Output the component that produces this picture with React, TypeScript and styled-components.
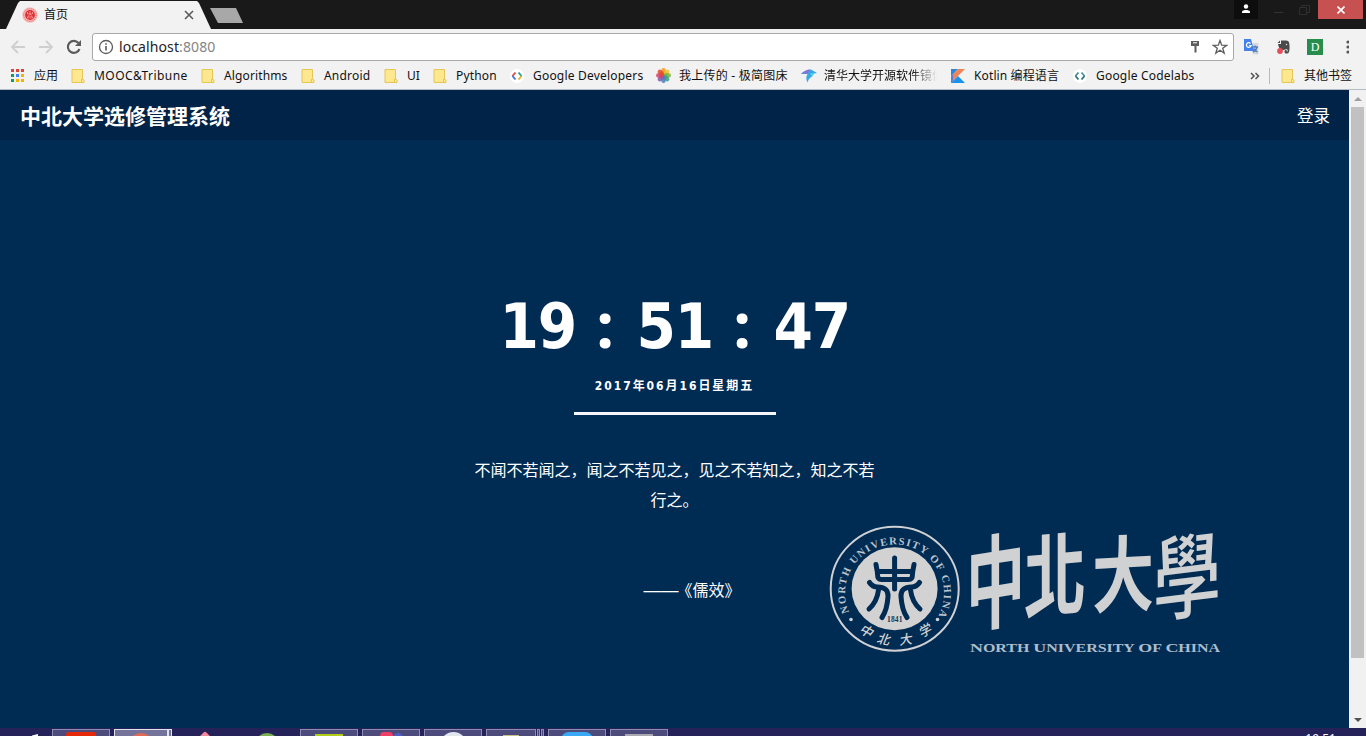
import React from 'react';
import styled, { createGlobalStyle } from 'styled-components';

const GlobalStyle = createGlobalStyle`
  * { box-sizing: border-box; }
  body { margin: 0; overflow: hidden; background: #002b53; }
  svg { display: block; flex: none; }
`;

const ui = `"Noto Sans", "Noto Sans CJK SC", sans-serif`;

const Screen = styled.div`
  width: 1366px;
  height: 736px;
  display: flex;
  flex-direction: column;
  overflow: hidden;
  font-family: ${ui};
`;

/* ---------- browser chrome ---------- */

const TabStrip = styled.div`
  height: 29px;
  flex: none;
  display: flex;
  background: #191919;
`;

const Tab = styled.div`
  width: 205px;
  height: 29px;
  margin-left: 6px;
  padding: 0 17px 0 16px;
  display: flex;
  align-items: center;
  background: #f2f2f2;
  clip-path: polygon(0 100%, 12px 3px, 14px 1px, 191px 1px, 193px 3px, 205px 100%);
`;

const TabTitle = styled.span`
  flex: 1;
  margin-left: 6px;
  font-size: 12px;
  line-height: 16px;
  color: #111;
`;

const NewTab = styled.div`
  width: 33px;
  height: 15px;
  margin: 8px 0 0 -1px;
  background: #a8a8a8;
  clip-path: polygon(0 0, 26px 0, 33px 100%, 8px 100%);
`;

const WindowButtons = styled.div`
  margin-left: auto;
  margin-right: 3px;
  display: flex;
`;

const WindowButton = styled.div<{ $w: number; $h?: number; $bg?: string; $pb?: number }>`
  width: ${p => p.$w}px;
  height: ${p => p.$h ?? 19}px;
  padding-bottom: ${p => p.$pb ?? 0}px;
  display: flex;
  align-items: center;
  justify-content: center;
  background: ${p => p.$bg ?? 'transparent'};
`;

const Toolbar = styled.div`
  height: 33px;
  flex: none;
  display: flex;
  align-items: center;
  padding: 3px 9px 0 10px;
  background: #f2f2f2;
`;

const NavIcons = styled.div`
  width: 82px;
  display: flex;
  gap: 12px;
`;

const AddressBar = styled.div`
  width: 1142px;
  height: 28px;
  padding: 0 5px 0 5px;
  display: flex;
  align-items: center;
  border: 1px solid #a9a9a9;
  border-radius: 3px;
  background: #fff;
`;

const Url = styled.span`
  flex: 1;
  margin-left: 5px;
  font-size: 14px;
  line-height: 20px;
  letter-spacing: 0.1px;
  color: #222;
`;

const Port = styled.span`
  color: #858585;
`;

const AddressActions = styled.div`
  display: flex;
  align-items: center;
  gap: 12px;
`;

const Extensions = styled.div`
  margin-left: 9px;
  display: flex;
  align-items: center;
  gap: 16px;
`;

const Bookmarks = styled.div`
  height: 28px;
  flex: none;
  display: flex;
  align-items: center;
  padding-left: 10px;
  background: #f2f2f2;
  border-bottom: 1px solid #b5bcc4;
`;

const Bookmark = styled.div<{ $w: number; $gap?: number }>`
  width: ${p => p.$w}px;
  flex: none;
  display: flex;
  align-items: center;
  gap: ${p => p.$gap ?? 9}px;
`;

const BookmarkLabel = styled.span<{ $track?: number; $fade?: boolean }>`
  font-size: 12px;
  line-height: 16px;
  white-space: nowrap;
  color: #111;
  letter-spacing: ${p => p.$track ?? 0}px;
  ${p => p.$fade && `
    width: 113px;
    overflow: hidden;
    mask-image: linear-gradient(to right, #000 88px, transparent 113px);
  `}
`;

const Divider = styled.div`
  width: 1px;
  height: 16px;
  margin: 0 11px 0 9px;
  background: #b9b9b9;
`;

/* ---------- page ---------- */

const Viewport = styled.div`
  height: 638px;
  flex: none;
  display: flex;
`;

const Page = styled.div`
  flex: 1;
  display: flex;
  flex-direction: column;
  background: #002b53;
  color: #fff;
`;

const SiteHeader = styled.header`
  height: 50px;
  flex: none;
  padding: 1px 19px 0 20px;
  display: flex;
  align-items: center;
  justify-content: space-between;
  background: #002347;
`;

const SiteTitle = styled.h1`
  margin: 0;
  font-size: 21px;
  line-height: 30px;
  font-weight: 700;
`;

const LoginLink = styled.span`
  font-size: 16.5px;
  line-height: 24px;
`;

const Hero = styled.main`
  flex: 1;
  display: grid;
  grid-template: 1fr / 1fr;
`;

const Intro = styled.section`
  grid-area: 1 / 1;
  display: flex;
  flex-direction: column;
  align-items: center;
  padding-top: 149px;
`;

const Clock = styled.div`
  height: 76px;
  display: flex;
  font-weight: 700;
  line-height: 76px;
`;

const ClockDigits = styled.span`
  width: 76px;
  padding-right: 3px;
  text-align: center;
  white-space: nowrap;
  font-family: "DejaVu Sans Condensed", "DejaVu Sans", sans-serif;
  font-size: 63px;
  font-stretch: condensed;
  letter-spacing: -1.2px;
`;

const ClockColon = styled.span`
  width: 61px;
  padding-right: 2px;
  text-align: center;
  font-family: "Noto Sans", sans-serif;
  font-size: 63px;
  line-height: 70px;
`;

const DateLine = styled.div`
  margin-top: 12px;
  font: 700 12px/18px "DejaVu Sans Condensed", "Noto Sans CJK SC", sans-serif;
  font-stretch: condensed;
  letter-spacing: 1.95px;
`;

const Rule = styled.div`
  width: 202px;
  height: 3px;
  margin: 17px 0 0 1px;
  background: #f5f7fa;
`;

const Quote = styled.p`
  width: 404px;
  margin: 39px 0 0;
  font: 400 16px/30px "Noto Sans CJK SC", sans-serif;
  text-align: center;
`;

const Source = styled.p`
  margin: 60px 0 0 35px;
  font: 400 16px/30px "Noto Sans CJK SC", sans-serif;
`;

const Dash = styled.span`
  margin-right: -2px;
  font-family: "Liberation Sans", sans-serif;
  font-size: 17.5px;
  line-height: 1;
`;

const LogoSlot = styled.div`
  grid-area: 1 / 1;
  place-self: end;
  margin: 0 119px 68px 0;
`;

const Scrollbar = styled.div`
  width: 17px;
  display: flex;
  flex-direction: column;
  align-items: center;
  background: #f1f1f1;
`;

const ScrollArrow = styled.div`
  height: 17px;
  display: flex;
  align-items: center;
`;

const Thumb = styled.div`
  width: 13px;
  height: 551px;
  margin-bottom: auto;
  background: #c1c1c1;
`;

/* ---------- taskbar ---------- */

const Taskbar = styled.div`
  height: 8px;
  flex: none;
  display: flex;
  padding-top: 1px;
  overflow: hidden;
  background: #25225a;
`;

const TaskSlot = styled.div<{ $w: number; $mr?: number; $kind?: 'open' | 'active' }>`
  width: ${p => p.$w}px;
  height: 12px;
  margin-right: ${p => p.$mr ?? 4}px;
  flex: none;
  display: flex;
  justify-content: center;
  overflow: hidden;
  border: 0 solid ${p => (p.$kind === 'active' ? '#e2e2ee' : '#8d8bb0')};
  border-width: ${p => (p.$kind ? '1px 1px 0' : '0')};
  background: ${p => (p.$kind === 'active' ? '#74749a' : p.$kind ? '#4d4b7c' : 'transparent')};
`;

const AppShape = styled.div<{ $w: number; $top: number; $bg: string; $radius?: string }>`
  width: ${p => p.$w}px;
  height: ${p => p.$w}px;
  flex: none;
  margin-top: ${p => p.$top}px;
  border-radius: ${p => p.$radius ?? '0'};
  background: ${p => p.$bg};
`;

const Diamond = styled(AppShape)`
  transform: rotate(45deg);
`;

const Tray = styled.div`
  margin: 4px 30px 0 auto;
  font-size: 12px;
  line-height: 12px;
  color: #fff;
`;

/* ---------- drawings ---------- */

const Folder = () => (
  <svg width="14" height="16" viewBox="0 0 14 16">
    <path d="M1 1.500h10.500v9.500l1.500 1v2.500H1z" fill="#fee88f" stroke="#e6c655" />
    <path d="M10.500 14v-3h1.500" fill="none" stroke="#e6c655" />
  </svg>
);

const AppsGrid = () => {
  const colors = ['#dc4437', '#dc4437', '#dc4437', '#149c5b', '#4284f3', '#f3b400', '#149c5b', '#f3b400', '#f3b400'];
  return (
    <svg width="14" height="14" viewBox="0 0 14 14">
      {colors.map((c, i) => (
        <rect key={i} x={1 + (i % 3) * 5} y={Math.floor(i / 3) * 5} width="3" height="3" fill={c} />
      ))}
    </svg>
  );
};

const Favicon = () => (
  <svg width="16" height="16" viewBox="0 0 16 16">
    <circle cx="8" cy="8" r="7.700" fill="#f9b9b7" />
    <circle cx="8" cy="8" r="6.300" fill="none" stroke="#ee6e6e" strokeDasharray="1.200 .8" />
    <circle cx="8" cy="8" r="4.900" fill="#dc2f35" />
    <path d="M5.500 5v2h5V5M8 4v4.500M6.500 8.500 5 11.500M9.500 8.500l1.500 3M7 9v2.500M9 9v2.500" stroke="#f8a5a2" strokeWidth=".8" fill="none" />
  </svg>
);

const Arrow = ({ flip }: { flip?: boolean }) => (
  <svg width="16" height="16" viewBox="0 0 16 16">
    <path d={flip ? 'M1 8h13M8 2l6 6-6 6' : 'M15 8H2M8 2 2 8l6 6'} fill="none" stroke="#cfcfcf" strokeWidth="1.800" />
  </svg>
);

const Reload = () => (
  <svg width="16" height="16" viewBox="0 0 16 16">
    <path d="M13.500 10A6 6 0 1 1 12.500 4" fill="none" stroke="#5a5a5a" strokeWidth="2.100" />
    <path d="M15 1v6H9z" fill="#5a5a5a" />
  </svg>
);

const Info = () => (
  <svg width="16" height="16" viewBox="0 0 16 16">
    <circle cx="8" cy="8" r="6.500" fill="none" stroke="#5c5c5c" strokeWidth="1.300" />
    <path d="M8 7v4.500M8 4.200v1.600" stroke="#5c5c5c" strokeWidth="1.600" />
  </svg>
);

const KeyIcon = () => (
  <svg width="10" height="14" viewBox="0 0 10 14">
    <path d="M1 1h8v5H6.500v6.500h-2V6H1z" fill="#5c5c5c" />
    <path d="M3 2.800h4" stroke="#fff" />
  </svg>
);

const StarIcon = () => (
  <svg width="16" height="16" viewBox="0 0 16 16">
    <path d="m8 1.500 1.700 4.700 5 .1-4 3 1.500 4.900L8 11.300l-4.200 2.900 1.500-4.900-4-3 5-.1z" fill="none" stroke="#5c5c5c" strokeWidth="1.300" />
  </svg>
);

const TranslateIcon = () => (
  <svg width="17" height="16" viewBox="0 0 17 16">
    <path d="M7 4h8.500v11.500H10z" fill="#d5d9df" />
    <path d="M1 0h7l3 12H1z" fill="#4382ed" />
    <path d="M7.500 4.500A2.300 2.300 0 1 0 8 6.500H6" fill="none" stroke="#fff" strokeWidth="1.200" />
    <path d="M9.500 8H15M12 6.500V8M14 8c-.5 2.500-2 4-4 5M10.500 9.500c1 1.500 2.500 3 4 3.500" stroke="#557eb8" strokeWidth="1.400" fill="none" />
  </svg>
);

const ElephantIcon = () => (
  <svg width="15" height="16" viewBox="0 0 15 16">
    <path d="M5 1.500h5c2 .2 3 1 3.200 2.500.6 3 .5 7-.2 9-.7 2-4.200 2-4.500 0-.2-1.600 1-2.200 2.200-1.800v1.200h.8c.5-1.500 0-2-1-2.200-1.500-.2-2 .8-3.500.8C4 11 2.500 8 2 5h3z" fill="#4b4b4b" />
    <path d="M4 1.500V4H1.500z" fill="#4b4b4b" />
    <circle cx="4" cy="12" r="2.900" fill="#e34e58" />
    <circle cx="10.500" cy="5.500" r=".7" fill="#f2f2f2" />
  </svg>
);

const DBadge = styled.div`
  width: 16px;
  height: 16px;
  display: grid;
  place-items: center;
  background: #278d4c;
  color: #fff;
  font: 12px/16px "Liberation Serif", serif;
`;

const Dots = () => (
  <svg width="10" height="14" viewBox="0 0 10 14">
    {[2, 7, 12].map(y => <circle key={y} cx="9" cy={y} r="1.600" fill="#555" />)}
  </svg>
);

const Brackets = ({ colors }: { colors: string[] }) => (
  <svg width="14" height="14" viewBox="0 0 14 14">
    <circle cx="7" cy="7" r="7" fill="#fff" />
    <g fill="none" strokeWidth="1.900">
      <path d="M5.500 3.500 2.500 7" stroke={colors[0]} />
      <path d="m2.500 7 3 3.500" stroke={colors[1]} />
      <path d="m8.500 3.500 3 3.500" stroke={colors[2]} />
      <path d="m11.500 7-3 3.500" stroke={colors[3]} />
    </g>
  </svg>
);

const Flower = () => {
  const petals = ['#f39a1d', '#e9c62b', '#7eb73d', '#3ba58a', '#4b83c5', '#875bb0', '#d64673', '#e34c30'];
  return (
    <svg width="15" height="15" viewBox="0 0 15 15">
      <circle cx="7.500" cy="7.500" r="4" fill="#b5653f" />
      {petals.map((c, i) => (
        <ellipse key={c} cx="7.500" cy="3.800" rx="2.400" ry="3.700" fill={c} opacity=".88" transform={`rotate(${i * 45} 7.500 7.500)`} />
      ))}
    </svg>
  );
};

const BirdIcon = () => (
  <svg width="16" height="14" viewBox="0 0 16 14">
    <path d="M0 5c3-3 6-4.500 10-4.500L16 4l-3 .5-2 3C9 9 7 10 7 13.500 5.500 12 5 10 5.500 7.500L6.500 5z" fill="#35a9e5" />
    <path d="M0 5c2.500-2.500 5-4 9-4.500L6.500 5C4 4 2 4 0 5z" fill="#8d70d4" />
    <path d="m9 4.500 7-.5-3 .5-2 3z" fill="#53d4e8" />
  </svg>
);

const KotlinIcon = () => (
  <svg width="14" height="14" viewBox="0 0 14 14">
    <path d="M0 0h7L0 7.500z" fill="#2a86dc" />
    <path d="M7 0h7L0 14V7.500z" fill="#ee8458" />
    <path d="m0 14 7-7 7 7z" fill="#1894ef" />
    <path d="M0 7.500 2 5.500V12l-2 2z" fill="#6377cf" />
  </svg>
);

/* University lockup: round seal, wordmark and English name */
const UniversityLogo = () => (
  <svg width="410" height="145" viewBox="0 0 410 145">
    <defs>
      <path id="sealArc" d="M29.500 98A49.500 48.500 0 1 1 120.500 96L119 99.500 117 103" />
    </defs>
    <g fill="none" stroke="#cfd1d4">
      <ellipse cx="74.700" cy="73.700" rx="64" ry="62" strokeWidth="2" />
    </g>
    <ellipse cx="74.600" cy="73.700" rx="43" ry="41.500" fill="#d2d2d3" />
    <text fill="#bdc5ce" fontFamily="'Liberation Serif', serif" fontSize="10.500" fontWeight="700">
      <textPath href="#sealArc" startOffset="1" textLength="197" lengthAdjust="spacing">NORTH UNIVERSITY OF CHINA</textPath>
    </text>
    <g fill="none" stroke="#002b53" strokeWidth="5" strokeLinecap="round" strokeLinejoin="round">
      <path d="M56 49.500c.5 4 1.500 6 1.500 9.500 0 4 1 5.500 4 5.500h27c3 0 4-1.500 4-5.500 0-3.500 1-5.500 1.500-9.500" />
      <path d="M58.500 56.500h33M74.600 43v31" />
      <path d="M49.500 67.500c2 3 4.500 4.500 8 4.500 7 0 11 3 10.500 9.500-.5 8-2 15-6 21" />
      <path d="M58.500 75c-1 8-4 14-9.500 19" />
      <path d="M99.500 67.500c-2 3-4.500 4.500-8 4.500-7 0-11 3-10.500 9.500.5 8 2 15 6 21" />
      <path d="M90.500 75c1 8 4 14 9.500 19" />
    </g>
    <text x="67" y="107" textLength="15.500" fill="#183653" fontFamily="'Liberation Serif', serif" fontSize="7.500" fontWeight="700">1841</text>
    <circle cx="31" cy="104.500" r="1.800" fill="#cfd1d4" />
    <circle cx="117.500" cy="104.500" r="1.800" fill="#cfd1d4" />
    <g fill="#cfd1d4" fontFamily="'Noto Sans CJK SC', sans-serif" fontSize="13" fontWeight="500" textAnchor="middle">
      <text transform="translate(44 120) rotate(28) skewX(-12)">中</text>
      <text transform="translate(62.500 129) rotate(10) skewX(-12)">北</text>
      <text transform="translate(86 129) rotate(-8) skewX(-12)">大</text>
      <text transform="translate(107 120) rotate(-28) skewX(-12)">学</text>
    </g>
    <g fill="#d0d1d2" fontFamily="'Noto Sans CJK TC', sans-serif" fontSize="100" fontWeight="500">
      <text transform="translate(146 110) skewY(-9) scale(.59 1.02)" fontWeight="700">中</text>
      <text transform="translate(204 97) skewY(-5) scale(.62 .91)" fontWeight="700">北</text>
      <text transform="translate(272 92) skewY(-3) scale(.62 .83)" fontWeight="700">大</text>
      <text transform="translate(333 100) skewY(-7) scale(.68 .92)">學</text>
    </g>
    <text x="150" y="136.500" textLength="250" lengthAdjust="spacingAndGlyphs" fill="#aebdcb" fontFamily="'Liberation Serif', serif" fontSize="12" fontWeight="700">
      <tspan fontSize="13.500">N</tspan>ORTH <tspan fontSize="13.500">U</tspan>NIVERSITY <tspan fontSize="13.500">O</tspan>F <tspan fontSize="13.500">C</tspan>HINA
    </text>
  </svg>
);

const App: React.FC = () => (
  <Screen>
    <GlobalStyle />
    <TabStrip>
      <Tab>
        <Favicon />
        <TabTitle>首页</TabTitle>
        <svg width="10" height="10" viewBox="0 0 10 10"><path d="m1 1 8 8M9 1 1 9" stroke="#5a5a5a" strokeWidth="1.600" /></svg>
      </Tab>
      <NewTab />
      <WindowButtons>
        <WindowButton $w={24} $bg="#0d0d0d" $pb={2}>
          <svg width="10" height="10" viewBox="0 0 10 10"><circle cx="5" cy="2.500" r="2.200" fill="#fff" /><path d="M1 9V7.500C2 5.500 8 5.500 9 7.500V9z" fill="#fff" /></svg>
        </WindowButton>
        <WindowButton $w={40}>
          <svg width="9" height="9" viewBox="0 0 9 9"><path d="M0 7.500h9" stroke="#333" /></svg>
        </WindowButton>
        <WindowButton $w={12}>
          <svg width="11" height="10" viewBox="0 0 11 10"><path d="M.5 2.500h7v7h-7zM3 2V.5h7.500v7H8" fill="none" stroke="#303030" /></svg>
        </WindowButton>
        <WindowButton $w={8} />
        <WindowButton $w={45} $bg="#c75050">
          <svg width="8" height="8" viewBox="0 0 8 8"><path d="m.5.5 7 7m0-7-7 7" stroke="#fff" strokeWidth="1.600" /></svg>
        </WindowButton>
      </WindowButtons>
    </TabStrip>

    <Toolbar>
      <NavIcons><Arrow /><Arrow flip /><Reload /></NavIcons>
      <AddressBar>
        <Info />
        <Url>localhost<Port>:8080</Port></Url>
        <AddressActions><KeyIcon /><StarIcon /></AddressActions>
      </AddressBar>
      <Extensions>
        <TranslateIcon />
        <ElephantIcon />
        <DBadge>D</DBadge>
        <Dots />
      </Extensions>
    </Toolbar>

    <Bookmarks>
      <Bookmark $w={61} $gap={10}><AppsGrid /><BookmarkLabel>应用</BookmarkLabel></Bookmark>
      <Bookmark $w={130}><Folder /><BookmarkLabel $track={0.45}>MOOC&amp;Tribune</BookmarkLabel></Bookmark>
      <Bookmark $w={100}><Folder /><BookmarkLabel $track={0.12}>Algorithms</BookmarkLabel></Bookmark>
      <Bookmark $w={83}><Folder /><BookmarkLabel $track={0.2}>Android</BookmarkLabel></Bookmark>
      <Bookmark $w={49}><Folder /><BookmarkLabel>UI</BookmarkLabel></Bookmark>
      <Bookmark $w={77}><Folder /><BookmarkLabel $track={0.15}>Python</BookmarkLabel></Bookmark>
      <Bookmark $w={146}><Brackets colors={['#dd4c40', '#4b73c8', '#25a18a', '#e4b324']} /><BookmarkLabel $track={0.2}>Google Developers</BookmarkLabel></Bookmark>
      <Bookmark $w={145} $gap={8}><Flower /><BookmarkLabel $track={0.25}>我上传的 - 极简图床</BookmarkLabel></Bookmark>
      <Bookmark $w={150} $gap={7}><BirdIcon /><BookmarkLabel $fade>清华大学开源软件镜像站</BookmarkLabel></Bookmark>
      <Bookmark $w={122}><KotlinIcon /><BookmarkLabel $track={0.12}>Kotlin 编程语言</BookmarkLabel></Bookmark>
      <Bookmark $w={177}><Brackets colors={['#4c9297', '#35747a', '#52999c', '#35747a']} /><BookmarkLabel $track={0.2}>Google Codelabs</BookmarkLabel></Bookmark>
      <svg width="10" height="8" viewBox="0 0 10 8"><path d="m1 1 3 3-3 3M5.500 1l3 3-3 3" fill="none" stroke="#555" strokeWidth="1.500" /></svg>
      <Divider />
      <Bookmark $w={80}><Folder /><BookmarkLabel>其他书签</BookmarkLabel></Bookmark>
    </Bookmarks>

    <Viewport>
      <Page>
        <SiteHeader>
          <SiteTitle>中北大学选修管理系统</SiteTitle>
          <LoginLink>登录</LoginLink>
        </SiteHeader>
        <Hero>
          <Intro>
            <Clock>
              <ClockDigits>19</ClockDigits>
              <ClockColon>:</ClockColon>
              <ClockDigits>51</ClockDigits>
              <ClockColon>:</ClockColon>
              <ClockDigits>47</ClockDigits>
            </Clock>
            <DateLine>2017年06月16日星期五</DateLine>
            <Rule />
            <Quote>不闻不若闻之，闻之不若见之，见之不若知之，知之不若行之。</Quote>
            <Source><Dash>——</Dash>《儒效》</Source>
          </Intro>
          <LogoSlot><UniversityLogo /></LogoSlot>
        </Hero>
      </Page>
      <Scrollbar>
        <ScrollArrow><svg width="8" height="4" viewBox="0 0 8 4"><path d="m0 4 4-4 4 4z" fill="#a0a0a0" /></svg></ScrollArrow>
        <Thumb />
        <ScrollArrow><svg width="8" height="4" viewBox="0 0 8 4"><path d="m0 0 4 4 4-4z" fill="#505050" /></svg></ScrollArrow>
      </Scrollbar>
    </Viewport>

    <Taskbar>
      <TaskSlot $w={52} $mr={0}><svg width="36" height="8" viewBox="0 0 36 8"><path d="M24 6.500 30 5v3h-6z" fill="#fff" /></svg></TaskSlot>
      <TaskSlot $w={58} $kind="open"><AppShape $w={30} $top={2} $bg="#e52808" $radius="3px" /></TaskSlot>
      <TaskSlot $w={54} $mr={0} $kind="active"><AppShape $w={26} $top={3} $bg="#e06a58" $radius="50%" /></TaskSlot>
      <TaskSlot $w={4} $mr={8} $kind="active" />
      <TaskSlot $w={50} $mr={12}><Diamond $w={14} $top={5} $bg="#f5879a" $radius="2px" /></TaskSlot>
      <TaskSlot $w={50} $mr={8}><AppShape $w={24} $top={4} $bg="#7caf54" $radius="50%" /></TaskSlot>
      <TaskSlot $w={58} $kind="open"><AppShape $w={28} $top={4} $bg="#b2cd17" /></TaskSlot>
      <TaskSlot $w={58} $kind="open"><AppShape $w={13} $top={2} $bg="#ef3f67" $radius="4px" /><AppShape $w={10} $top={3} $bg="#4e5ec4" $radius="5px" /></TaskSlot>
      <TaskSlot $w={58} $kind="open"><AppShape $w={27} $top={2} $bg="#e2e6ee" $radius="50%" /></TaskSlot>
      <TaskSlot $w={50} $mr={1} $kind="open"><AppShape $w={16} $top={5} $bg="#c9c184" /></TaskSlot>
      <TaskSlot $w={3} $mr={1} $kind="open" />
      <TaskSlot $w={3} $kind="open" />
      <TaskSlot $w={58} $kind="open"><AppShape $w={32} $top={2} $bg="#39a8f5" $radius="8px" /></TaskSlot>
      <TaskSlot $w={58} $kind="open"><AppShape $w={28} $top={4} $bg="#a9a9af" /></TaskSlot>
      <Tray>19:51</Tray>
    </Taskbar>
  </Screen>
);

export default App;
